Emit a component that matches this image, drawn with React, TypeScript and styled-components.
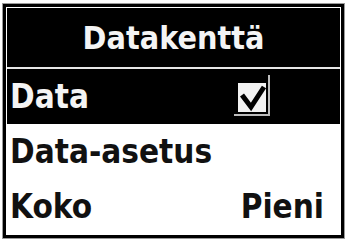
import { createGlobalStyle, styled } from 'styled-components'

const Global = createGlobalStyle`
	html, body {
		margin: 0;
		background: #ffffff;
	}
`

const Screen = styled.div`
	width: 346px;
	height: 240px;
	padding: 4px 2px 2px 3px;
	box-sizing: border-box;
`

const Frame = styled.div`
	height: 234px;
	box-sizing: border-box;
	border: 3px solid #000000;
	box-shadow: 0 0 0 1px #9a9a9a;
	padding: 1px;
	background: #ffffff;
	display: flex;
	flex-direction: column;
	font-family: 'DejaVu Sans Condensed', 'DejaVu Sans', sans-serif;
	font-weight: bold;
`

const Title = styled.div`
	height: 59px;
	background: #000000;
	color: #f4f4f4;
	display: flex;
	align-items: center;
	justify-content: center;
	font-size: 32px;
	border-bottom: 2px solid #e6e6e6;
	box-sizing: content-box;
`

const Row = styled.div<{ $active?: boolean }>`
	height: 55px;
	display: flex;
	align-items: center;
	justify-content: space-between;
	padding: 0 16px 0 3px;
	font-size: 33px;
	background: ${(p) => (p.$active ? '#000000' : '#ffffff')};
	color: ${(p) => (p.$active ? '#f4f4f4' : '#111111')};
`

const Check = styled.svg`
	width: 40px;
	height: 44px;
	margin-right: 50px;
	margin-top: 1px;
`

const CheckBox = () => (
	<Check viewBox="0 0 40 44">
		<rect x="4" y="8" width="28" height="29" fill="#f2f2f2" />
		<path d="M8 20 L17 32 L30 12" stroke="#000" strokeWidth="5" fill="none" />
		<path d="M35 0 V40 H0" stroke="#bdbdbd" strokeWidth="2" fill="none" />
	</Check>
)

export default function App() {
	return (
		<>
			<Global />
			<Screen>
				<Frame>
					<Title>Datakenttä</Title>
					<Row $active>
						<span>Data</span>
						<CheckBox />
					</Row>
					<Row>
						<span>Data-asetus</span>
					</Row>
					<Row>
						<span>Koko</span>
						<span>Pieni</span>
					</Row>
				</Frame>
			</Screen>
		</>
	)
}
